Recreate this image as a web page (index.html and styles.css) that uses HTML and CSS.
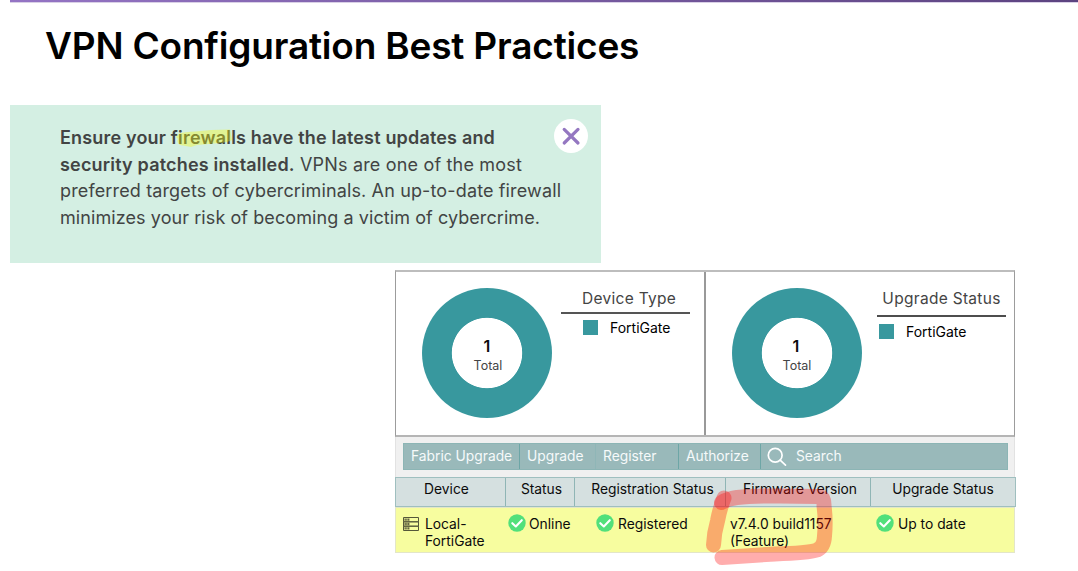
FILE: index.html
```html
<!DOCTYPE html>
<html lang="en">
<head>
<meta charset="utf-8">
<title>VPN Configuration Best Practices</title>
<link rel="stylesheet" href="styles.css">
</head>
<body>
<div class="accent"></div>
<h1 class="title">VPN Configuration Best Practices</h1>

<section class="callout">
  <p class="callout-text">
    <span class="line strong l1">Ensure your firewalls have the latest updates and</span>
    <span class="line l2"><b class="strong">security patches installed.</b> VPNs are one of the most</span>
    <span class="line l3">preferred targets of cybercriminals. An up-to-date firewall</span>
    <span class="line l4">minimizes your risk of becoming a victim of cybercrime.</span>
  </p>
  <button class="close" aria-label="Close">
    <svg width="34" height="34" viewBox="0 0 34 34"><path d="M10.2 10.4 24 24M24 10.4 10.2 24" stroke="#9477c1" stroke-width="3.2" stroke-linecap="round"/></svg>
  </button>
  <svg class="marker" width="60" height="22" viewBox="0 0 60 22"><path d="M4 5.500Q10 4 20 3.500L36 2 55 1.500L57 12Q54 14 45 15L22 17 16 19 5 17Q1 14 3 11L1 9Z" fill="#f5f916" fill-opacity=".38"/></svg>
</section>

<main class="panel">
  <div class="cards">
    <section class="card">
      <div class="donut"><span class="count">1</span><span class="total">Total</span></div>
      <div class="legend">
        <h2 class="legend-title type">Device Type</h2>
        <div class="legend-item"><i class="swatch"></i>FortiGate</div>
      </div>
    </section>
    <section class="card second">
      <div class="donut"><span class="count">1</span><span class="total">Total</span></div>
      <div class="legend upgrade">
        <h2 class="legend-title">Upgrade Status</h2>
        <div class="legend-item"><i class="swatch"></i>FortiGate</div>
      </div>
    </section>
  </div>

  <div class="toolbar-wrap">
    <nav class="toolbar">
      <span class="tool">Fabric Upgrade</span>
      <span class="tool">Upgrade</span>
      <span class="tool">Register</span>
      <span class="tool">Authorize</span>
      <span class="tool search">
        <svg width="20" height="20" viewBox="0 0 20 20" fill="none" stroke="#fff" stroke-width="1.700" stroke-linecap="round"><circle cx="8.200" cy="8.200" r="6.900"/><path d="m13.200 13.200 5.300 5"/></svg>
        Search
      </span>
    </nav>
  </div>

  <div class="grid head">
    <span class="th device">Device</span>
    <span class="th status">Status</span>
    <span class="th reg">Registration Status</span>
    <span class="th firmware">Firmware Version</span>
    <span class="th upg">Upgrade Status</span>
  </div>
  <div class="grid row">
    <span class="td device">
      <svg class="server" width="16" height="14" viewBox="0 0 16 14" fill="none" stroke="#55573a"><path d="M.5.5h15v4.300H.5zM.5 4.800h15v4.400H.5zM.5 9.200h15v4.300H.5z"/><path d="M1.500 2.600h5M1.500 7h5M1.500 11.400h5" stroke-width="2.400" stroke-dasharray="1.300 .5"/></svg>
      <span>Local-<br>FortiGate</span>
    </span>
    <span class="td status"><svg class="check" viewBox="0 0 18 18"><circle cx="9" cy="9" r="8.700" fill="#51e07b"/><path d="m4.300 9.200 3.500 3.300 6-6.300" fill="none" stroke="#fff" stroke-width="2.100" stroke-linecap="round" stroke-linejoin="round"/></svg>Online</span>
    <span class="td reg"><svg class="check" viewBox="0 0 18 18"><circle cx="9" cy="9" r="8.700" fill="#51e07b"/><path d="m4.300 9.200 3.500 3.300 6-6.300" fill="none" stroke="#fff" stroke-width="2.100" stroke-linecap="round" stroke-linejoin="round"/></svg>Registered</span>
    <span class="td firmware"><span>v7.4.0 build1157<br>(Feature)</span></span>
    <span class="td upg"><svg class="check" viewBox="0 0 18 18"><circle cx="9" cy="9" r="8.700" fill="#51e07b"/><path d="m4.300 9.200 3.500 3.300 6-6.300" fill="none" stroke="#fff" stroke-width="2.100" stroke-linecap="round" stroke-linejoin="round"/></svg>Up to date</span>
  </div>
  <svg class="annotation" width="140" height="90" viewBox="0 0 140 90" fill="none" stroke="#f00" stroke-opacity=".32" stroke-width="15" stroke-linejoin="round" stroke-linecap="round">
    <path d="M24 18Q20 28 17.500 41Q14 53 13.500 65"/>
    <path d="M21.500 22.500Q27 19 37 17.500Q60 15 118 16.500Q124.500 16 124 26Q126 40 124.500 56Q124 67 117 70Q108 73 75 74L22 77.500"/>
  </svg>
</main>
</body>
</html>
```

FILE: styles.css
```css
* { box-sizing: border-box; }
body {
  margin: 0;
  width: 1078px;
  height: 571px;
  overflow: hidden;
  background: #fff;
  color: #0b0b0b;
  font-family: Inter, "Liberation Sans", sans-serif;
}
.accent {
  height: 3px;
  margin-left: 10px;
  background: linear-gradient(90deg, #9474c4, #5c4380);
  border-bottom: 1px solid #d9d0e6;
}
.title {
  margin: 0;
  padding: 20px 0 0 45px;
  height: 102px;
  color: #000;
  font-size: 37px;
  font-weight: 600;
  line-height: 46px;
  letter-spacing: -.18px;
  white-space: nowrap;
}
.callout {
  position: relative;
  display: flex;
  justify-content: space-between;
  width: 591px;
  height: 158px;
  margin-left: 10px;
  padding: 14px 13px 0 50px;
  background: #d4efe3;
}
.callout-text {
  flex: 1;
  min-width: 0;
  margin: 6px 0 0;
  color: #424443;
  font-size: 18px;
  line-height: 26.700px;
}
.line { display: block; white-space: nowrap; }
.l2 { letter-spacing: .18px; }
.l3 { letter-spacing: .14px; }
.l4 { letter-spacing: .08px; }
.strong { font-weight: 600; letter-spacing: .18px; }
.close {
  flex: none;
  width: 34px;
  height: 34px;
  padding: 0;
  border: 0;
  border-radius: 50%;
  background: #fff;
}
.close svg { display: block; }
.marker { position: absolute; left: 165px; top: 23px; }

.panel {
  position: relative;
  width: 620px;
  margin: 7px 0 0 395px;
}
.cards {
  display: grid;
  grid-template-columns: 310px 310px;
  height: 167px;
  border: 1px solid #9c9c9c;
  border-top: 2px solid #bdbdbd;
  border-bottom: 2px solid #b5b5b5;
}
.card {
  display: flex;
  padding: 16px 0 0 26px;
}
.second { margin-left: -2px; border-left: 2px solid #999; }
.donut {
  display: flex;
  flex: none;
  flex-direction: column;
  align-items: center;
  width: 130px;
  height: 130px;
  padding-top: 48px;
  border-radius: 50%;
  background: radial-gradient(circle, #fff 34.800px, #38989e 35.600px);
}
.count { font-size: 16px; font-weight: 600; line-height: 21px; }
.total { font-size: 12.500px; line-height: 17px; color: #444; padding-left: 2px; }
.second .count, .second .total { margin-left: -2px; }
.legend { width: 129px; margin-left: 9px; }
.legend-title {
  margin: 0;
  height: 26px;
  border-bottom: 2px solid #555;
  color: #444;
  font-size: 15.500px;
  font-weight: 400;
  line-height: 21px;
  letter-spacing: .3px;
  text-align: center;
}
.type { padding-left: 7px; }
.legend-item {
  display: flex;
  align-items: center;
  gap: 12px;
  height: 15px;
  margin: 6px 0 0 22px;
  color: #000;
  font-size: 14px;
}
.swatch { width: 15px; height: 15px; background: #38989e; }
.upgrade { margin-left: 15px; }
.upgrade .legend-title { height: 29px; border-color: #4d4d4d; }
.upgrade .legend-item { margin: 7px 0 0 2px; }

.toolbar-wrap {
  height: 40px;
  padding: 6px 6px 0 7px;
  background: #f0f0f0;
  border: solid #e2e2e2;
  border-width: 0 1px;
}
.toolbar {
  display: grid;
  grid-template-columns: 116px 76px 83px 82px 1fr;
  height: 27px;
  border: 1px solid #8cb5b5;
  background: #99b9ba;
  color: #f6fafa;
  font-size: 13.800px;
  line-height: 25px;
}
.tool {
  display: flex;
  align-items: center;
  padding-left: 7px;
  white-space: nowrap;
  border-right: 1px solid #6da6a6;
}
.tool:nth-child(2) { border-color: #8fb6b7; }
.search { gap: 9px; padding-left: 6px; border: 0; }
.grid {
  display: grid;
  grid-template-columns: 110px 69px 151px 145px 144px;
  width: 621px;
}
.head {
  height: 30px;
  background: #d5e0e0;
  border: 1px solid #9fbfbf;
  font-size: 13.800px;
  line-height: 23px;
}
.th { border-right: 1px solid #8fb5b5; text-align: center; white-space: nowrap; }
.th:last-child { border: 0; }
.th.device { padding-right: 8px; }
.th.status { padding-left: 3px; }
.th.reg { padding-left: 5px; }
.th.firmware { padding-left: 4px; }
.row {
  width: 620px;
  height: 46px;
  border: 1px solid #e3e6c8;
  background: #f7fd9f;
  font-size: 13.800px;
  line-height: 17px;
}
.td { display: flex; align-items: flex-start; padding-top: 8px; white-space: nowrap; }
.td.device { padding-left: 7px; gap: 6px; }
.server { margin-top: 1px; }
.check { width: 18px; height: 18px; margin: -2px 4px 0 0; flex: none; }
.td.status { padding-left: 2px; }
.td.status .check { margin-right: 3px; }
.td.reg { padding-left: 21px; }
.td.firmware { padding-left: 4px; }
.td.upg { padding-left: 5px; }
.annotation { position: absolute; left: 305px; top: 210px; }
```
